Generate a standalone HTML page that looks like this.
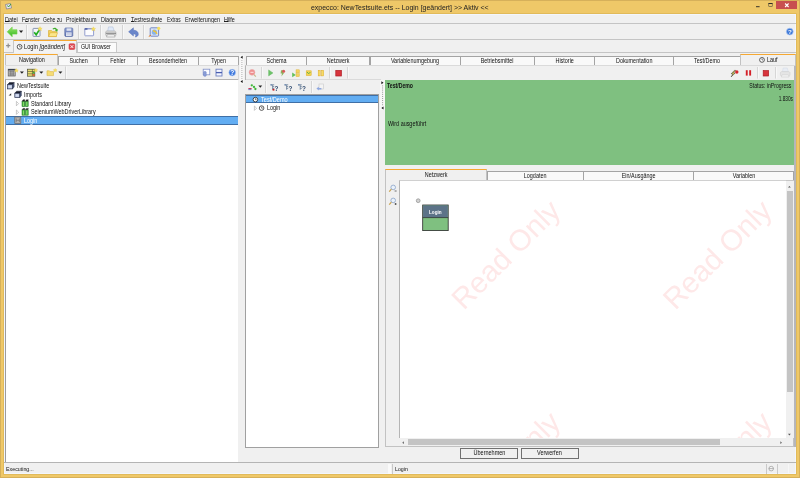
<!DOCTYPE html>
<html>
<head>
<meta charset="utf-8">
<title>expecco</title>
<style>
*{box-sizing:border-box;margin:0;padding:0}
html{background:#efc868}
body{filter:blur(.3px)}
html,body{width:800px;height:478px;overflow:hidden;background:#efc868;font-family:"Liberation Sans",sans-serif;font-size:6.3px;color:#111;-webkit-text-size-adjust:none}
.a{position:absolute}
.t{position:absolute;white-space:nowrap;line-height:8px;height:8px;transform:scaleX(.86);transform-origin:0 50%}
.s{display:inline-block;transform:scaleX(.86);white-space:nowrap}
#win{left:4px;top:13.9px;width:792.1px;height:460px;background:#f0f0f0;border:.9px solid #f3f6fc;box-shadow:0 0 0 .8px #deb758}
#frame{left:0;top:0;width:800px;height:478px;border:.9px solid #d6b05a}
.hl{position:absolute;height:1px;background:#c4c4c4;left:4px;width:792px}
.tab{position:absolute;height:9.3px;top:55.6px;background:#f9f9f9;border:.8px solid #a4a4a4;border-bottom:none;text-align:center;line-height:7.8px;white-space:nowrap;margin-right:-.8px;box-shadow:0 .8px 0 #c8c8c8}
.tab.on{background:#f0f0f0;top:53.6px;height:12.4px;border:.8px solid #c2c2c2;border-top:1.5px solid #f5a832;border-bottom:none;line-height:10.6px;box-shadow:none}
.tab2{top:170.9px;height:9px;line-height:7.4px}
.tab2.on{top:169px;height:11.8px;line-height:9.6px}
.white{position:absolute;background:#fff;border:1px solid #8e8e8e}
.sel{position:absolute;background:#62adf2;color:#fff;border-top:.7px solid #3f6fa6;border-bottom:.7px solid #3f6fa6}
u{text-decoration:none;display:inline-block;line-height:7px;height:6.7px;border-bottom:.8px solid #222}
.vs{position:absolute;width:1px;background:#c9c9c9}
.btn{position:absolute;height:10.6px;top:448.2px;border:.9px solid #707070;background:#f0f0f0;text-align:center;line-height:8.6px;font-size:6.4px}
.wm{position:absolute;color:#fde3e3;font-size:23px;transform:rotate(-45deg);transform-origin:0 0;white-space:nowrap;line-height:24px}
</style>
</head>
<body>
<!-- title bar -->
<div class="t" style="left:311px;top:3.6px;font-size:7.4px;color:#222;transform:scaleX(.94)">expecco: NewTestsuite.ets -- Login [geändert] &gt;&gt; Aktiv &lt;&lt;</div>
<div class="a" style="left:776.2px;top:.4px;width:20.5px;height:9.1px;background:#c8504f"></div>
<svg class="a" style="left:0;top:0" width="800" height="14">
 <path d="M785.1 3.5l3.5 3.5m0-3.5l-3.5 3.5" stroke="#fff" stroke-width="1.1" fill="none"/>
 <rect x="768.8" y="3.4" width="3.4" height="3" fill="none" stroke="#333" stroke-width=".5"/><path d="M768.6 3.5h3.8" stroke="#222" stroke-width=".9"/>
 <path d="M756 6.7h3.6" stroke="#222" stroke-width=".9"/>
 <!-- app icon -->
 <path d="M5.5 4.5l5-1 1 4.5-5 1z" fill="#e8e8f0" stroke="#7a7a8a" stroke-width=".7"/>
 <path d="M7.5 5.5l1 1.5 2.5-3" stroke="#3a9a3a" stroke-width="1" fill="none"/>
</svg>

<div id="frame" class="a"></div>
<div id="win" class="a"></div>

<!-- menu bar -->
<div class="t" style="left:5px;top:15.6px"><u>D</u>atei</div>
<div class="t" style="left:21.7px;top:15.6px;transform:scaleX(.825)">F<u>e</u>nster</div>
<div class="t" style="left:43px;top:15.6px;transform:scaleX(.805)">Gehe zu</div>
<div class="t" style="left:66px;top:15.6px">Projektbaum</div>
<div class="t" style="left:101px;top:15.6px">Diagramm</div>
<div class="t" style="left:131px;top:15.6px"><u>T</u>estresultate</div>
<div class="t" style="left:167px;top:15.6px;transform:scaleX(.76)">Extras</div>
<div class="t" style="left:185px;top:15.6px">Erweiterungen</div>
<div class="t" style="left:224px;top:15.6px"><u>H</u>ilfe</div>
<div class="hl" style="top:23px"></div>
<div class="hl" style="top:39px"></div>
<div class="hl" style="top:52px"></div>

<!-- MAIN TOOLBAR -->
<svg id="tb1" class="a" style="left:0;top:23.6px" width="800" height="16">
 <defs>
  <linearGradient id="gg" x1="0" y1="0" x2="0" y2="1"><stop offset="0" stop-color="#9be86a"/><stop offset="1" stop-color="#2fb520"/></linearGradient>
  <linearGradient id="bl" x1="0" y1="0" x2="0" y2="1"><stop offset="0" stop-color="#8e9fd2"/><stop offset="1" stop-color="#5a6eae"/></linearGradient>
 </defs>
 <!-- back arrow -->
 <path d="M7.2 7.8L12.2 3v2.7h4.8v4.4h-4.8v2.7z" fill="url(#gg)" stroke="#6fd24a" stroke-width=".6"/>
 <path d="M19 6.6h4.2l-2.1 2.3z" fill="#222"/>
 <path d="M26.5 1v14M78.5 1v14M100.5 1v14M122.5 1v14M143.5 1v14" stroke="#d2d2d2" stroke-width="1"/><path d="M27.4 1v14M79.4 1v14M101.4 1v14M123.4 1v14M144.4 1v14" stroke="#fbfbfb" stroke-width=".8"/>
 <!-- check doc -->
 <rect x="33" y="4.4" width="7" height="8" rx=".6" fill="#f4f6fa" stroke="#7c8cab" stroke-width=".9"/>
 <path d="M34.2 8.2l2 2.6 3.4-5.4" stroke="#1fae22" stroke-width="1.7" fill="none"/>
 <path d="M40 2.6l.7 1.4 1.5.2-1.1 1 .3 1.5-1.4-.8-1.4.8.3-1.5-1.1-1 1.5-.2z" fill="#f6e060" stroke="#e8c840" stroke-width=".3"/>
 <!-- open folder -->
 <path d="M48.5 6.5h3l.8.9h4.2v5.2h-8z" fill="#f3d25e" stroke="#d7a92d" stroke-width=".6"/>
 <path d="M48.6 12.5l1.6-3.8h7.4l-1.4 3.8z" fill="#fbe68a" stroke="#d7a92d" stroke-width=".5"/>
 <path d="M52.5 4.8c1.6-1.7 3.8-1.4 4.6.6l1-.3-.9 2.6-2.4-1.4 1-.4c-.6-1.1-1.8-1.2-2.7-.4z" fill="#3fae2c"/>
 <!-- save -->
 <rect x="64.8" y="4" width="8" height="8.4" rx=".9" fill="url(#bl)" stroke="#5c6ea8" stroke-width=".7"/>
 <rect x="66.6" y="4.4" width="4.6" height="2.4" fill="#dfe4f2"/>
 <rect x="66" y="8.4" width="5.6" height="3.6" fill="#e4e8f4"/>
 <path d="M66.4 9.6h4.8M66.4 10.8h4.8" stroke="#aab4d4" stroke-width=".5"/>
 <!-- new -->
 <rect x="84.8" y="4.6" width="8.8" height="7.2" rx=".6" fill="#fcfcfe" stroke="#7a88c4" stroke-width=".8"/>
 <path d="M84.6 5h3" stroke="#3e4f9a" stroke-width="1.4"/><path d="M87.6 4.9h6" stroke="#8e9bd0" stroke-width="1"/>
 <path d="M93.4 2.8l.7 1.4 1.5.2-1.1 1 .3 1.5-1.4-.8-1.4.8.3-1.5-1.1-1 1.5-.2z" fill="#f6e060" stroke="#e8c840" stroke-width=".3"/>
 <!-- printer -->
 <path d="M107.6 7.5l.9-4.6h4.4l1.4 4.6z" fill="#dfe9f8" stroke="#a9b8d6" stroke-width=".5"/>
 <path d="M105.6 8.2c0-.8 1-1.3 2-1.3h6.2c1.2 0 2.2.6 2.2 1.5v2.4c0 .8-.8 1.2-1.6 1.2h-7.2c-.9 0-1.6-.5-1.6-1.3z" fill="#d9d9d9" stroke="#9c9c9c" stroke-width=".5"/>
 <path d="M107.3 10.6h7l.8 2.4h-8.6z" fill="#f2f2f2" stroke="#8a8a8a" stroke-width=".5"/>
 <path d="M106 9.3h10" stroke="#6e6e6e" stroke-width=".8"/>
 <!-- undo -->
 <path d="M128.6 7.8L133.4 3.8V6.2C136.5 6.2 138.5 8 138.3 10.4C138.1 11.8 137 12.8 135.2 13C136.2 12 136.2 10 133.4 9.8V12z" fill="#6a86ca" stroke="#5570b8" stroke-width=".5"/>
 <!-- settings icon -->
 <rect x="150.2" y="3.8" width="8.4" height="8.4" rx=".8" fill="#dbe4f5" stroke="#6a7fbf" stroke-width=".9"/>
 <circle cx="154.4" cy="8.2" r="2.6" fill="#8ab4e8"/>
 <path d="M153 6.5l2.6 1.2 1.4 2.2" stroke="#f2c230" stroke-width="1.4" fill="none"/>
 <circle cx="158.7" cy="4.3" r="1.6" fill="#f6df5a"/>
 <path d="M148.8 12.4l2-1" stroke="#e07a20" stroke-width="1"/>
 <!-- help right -->
 <circle cx="789.8" cy="7.6" r="3.4" fill="#3c78d8" stroke="#a9c4f0" stroke-width=".7"/>
 <text x="789.8" y="9.9" font-size="6.2" font-weight="bold" fill="#fff" text-anchor="middle" font-family="Liberation Sans">?</text>
</svg>

<!-- document tabs -->
<div id="doctabs">
 <svg class="a" style="left:6px;top:42.5px" width="7" height="7"><path d="M2.2 .5v4.2M.1 2.6h4.2" stroke="#8e8e8e" stroke-width="1.2"/></svg>
 <div class="a" style="left:13px;top:40px;width:64px;height:13px;background:#f3f3f3;border:1px solid #c6c6c6;border-top:1.6px solid #f5a832;border-bottom:none;border-radius:1px 1px 0 0"></div>
 <svg class="a" style="left:15.7px;top:43px" width="8" height="8"><circle cx="3.6" cy="3.8" r="2.4" fill="#fff" stroke="#333" stroke-width=".8"/><path d="M3.6 2.3v1.6h1.3" stroke="#333" stroke-width=".6" fill="none"/></svg>
 <div class="t" style="left:24px;top:43px;font-size:6.3px;transform:scaleX(.905)">Login <i>[geändert]</i></div>
 <svg class="a" style="left:67.5px;top:42.5px" width="8" height="8"><rect x="1" y=".7" width="5.8" height="5.8" rx="1" fill="#de4a52" stroke="#c8323a" stroke-width=".5"/><path d="M2.5 2.2l2.8 2.8m0-2.8l-2.8 2.8" stroke="#fff" stroke-width=".9"/></svg>
 <div class="a" style="left:77px;top:42px;width:40px;height:10px;background:#fbfbfb;border:1px solid #c9c9c9;border-bottom:none;border-radius:1px 1px 0 0"></div>
 <div class="t" style="left:81px;top:43.3px;font-size:6.6px;transform:scaleX(.79)">GUI Browser</div>
</div>

<!-- LEFT PANEL -->
<div id="left">
 <div class="tab on" style="left:5px;width:53px"><span class="s">Navigation</span></div>
 <div class="tab" style="left:58px;width:40.8px"><span class="s">Suchen</span></div>
 <div class="tab" style="left:98px;width:39.8px"><span class="s">Fehler</span></div>
 <div class="tab" style="left:136.8px;width:62.4px"><span class="s">Besonderheiten</span></div>
 <div class="tab" style="left:198.3px;width:40.5px"><span class="s">Typen</span></div>
 <div class="a" style="left:5px;top:65px;width:234px;height:15px;border:1px solid #dadada;border-bottom:none;background:#f0f0f0"></div>
 <svg class="a" style="left:0;top:66px" width="246" height="14">
  <!-- icon 1 -->
  <rect x="8.2" y="3.2" width="7" height="6.8" fill="#c4c4c4" stroke="#555" stroke-width=".7"/>
  <path d="M8.2 3.7h7" stroke="#38404e" stroke-width="1.3"/>
  <path d="M9.2 5.6h5M9.2 7.2h5M9.2 8.8h5M10.4 4.4v5.4M12 4.4v5.4M13.6 4.4v5.4" stroke="#6a6a6a" stroke-width=".55"/>
  <path id="st" d="M16.4 2.6l.6 1.2 1.3.2-.95.9.25 1.3-1.2-.65-1.2.65.25-1.3-.95-.9 1.3-.2z" fill="#f6e060" stroke="#e6c63c" stroke-width=".3"/>
  <path d="M19.9 5.6h4l-2 2.2z" fill="#222"/>
  <!-- icon 2 -->
  <rect x="27.6" y="3.2" width="7.2" height="7" fill="#ece070" stroke="#4e4e38" stroke-width=".7"/>
  <path d="M27.6 5.5h7.2M27.6 7.8h7.2M32.4 3.2v7" stroke="#4e4e38" stroke-width=".6"/>
  <rect x="32.7" y="5.8" width="1.9" height="1.7" fill="#46b03a"/><rect x="32.7" y="8.1" width="1.9" height="1.7" fill="#e0552e"/>
  <use href="#st" x="19.4" y="-.2"/>
  <path d="M39.3 5.6h4l-2 2.2z" fill="#222"/>
  <!-- icon 3 -->
  <path d="M47 4.8h2.4l.7.8h3.4v4h-6.5z" fill="#f6dc74" stroke="#dcb848" stroke-width=".6"/>
  <use href="#st" x="38.8" y="-.2"/>
  <path d="M58.4 5.6h4l-2 2.2z" fill="#222"/>
  <path d="M65.5 0.5v13" stroke="#d2d2d2"/><path d="M66.4 0.5v13" stroke="#fbfbfb" stroke-width=".8"/>
  <!-- right icons -->
  <rect x="203.2" y="3.2" width="6.6" height="5.6" fill="#fafbff" stroke="#7f90c8" stroke-width=".8"/>
  <rect x="203.6" y="5.6" width="2.6" height="4.6" rx=".6" fill="#8a9ed8" stroke="#6d80c0" stroke-width=".5"/>
  <rect x="216" y="3.2" width="6" height="6.8" fill="#f4f6ff" stroke="#6d80c0" stroke-width=".9"/>
  <path d="M216 6.6h6" stroke="#4a5fb0" stroke-width="1.3"/>
  <circle cx="232.2" cy="6.6" r="3.3" fill="#3b76dc" stroke="#a6c2f2" stroke-width=".6"/>
  <text x="232.2" y="9" font-size="6.6" font-weight="bold" fill="#fff" text-anchor="middle" font-family="Liberation Sans">?</text>
 </svg>
 <div class="white" style="left:4.7px;top:78.6px;width:233.8px;height:383.2px;border-right:none;border-bottom:none;border-top-color:#b4b4b4;border-left-color:#9c9c9c"></div>
 <div class="sel" style="left:6px;top:116px;width:232px;height:9px"></div>
 <div class="t" style="left:16.5px;top:82.3px">NewTestsuite</div>
 <div class="t" style="left:24px;top:91px">Imports</div>
 <div class="t" style="left:31px;top:99.7px">Standard Library</div>
 <div class="t" style="left:31px;top:108.4px">SeleniumWebDriverLibrary</div>
 <div class="t" style="left:24px;top:116.5px;color:#fff">Login</div>
 <svg class="a" style="left:0;top:80px" width="60" height="48">
  <defs><g id="cube"><path d="M.2 2.2l1.8-2h4.8l-1.6 2z" fill="#1c2030" stroke="#14182a" stroke-width=".5"/><rect x=".2" y="2.3" width="5" height="4.2" fill="#b6c2de" stroke="#2a3350" stroke-width=".7"/><path d="M5.2 2.3l1.6-2v4.2l-1.6 2z" fill="#4a5678" stroke="#222a44" stroke-width=".4"/><rect x="1.2" y="3.3" width="3" height="2.2" fill="#d4dcf0"/></g>
  <g id="lib"><rect x="0" y="1.6" width="2.8" height="5.4" fill="#3db23a" stroke="#1f6a22" stroke-width=".5"/><rect x="3.4" y="1.6" width="2.8" height="5.4" fill="#3db23a" stroke="#1f6a22" stroke-width=".5"/><path d="M.2 1.6l.8-1.4h2l-.6 1.4M3.6 1.6l.8-1.4h2l-.6 1.4" fill="#222" stroke="#222" stroke-width=".4"/><path d="M1.4 2.4v4M4.8 2.4v4" stroke="#b5f08a" stroke-width=".7"/></g></defs>
  <use href="#cube" x="7.4" y="2.4"/>
  <use href="#cube" x="14.6" y="11"/>
  <path d="M8.6 15.6l2.6-2.4v2.4z" fill="#333"/>
  <path d="M16.4 21.4l2.2 2.2-2.2 2.2z" fill="#fff" stroke="#a6a6a6" stroke-width=".6"/>
  <path d="M16.4 30l2.2 2.2-2.2 2.2z" fill="#fff" stroke="#a6a6a6" stroke-width=".6"/>
  <use href="#lib" x="22" y="19.6"/>
  <use href="#lib" x="22" y="28.2"/>
  <rect x="14.8" y="37" width="6" height="6.6" fill="#b4b4b4" stroke="#666" stroke-width=".7"/>
  <path d="M16.2 38.4v3.8M19.4 38.4v3.8M16.2 40.3h3.2" stroke="#707070" stroke-width=".7"/>
 </svg>
 <!-- splitter -->
 <svg class="a" style="left:239px;top:54px" width="7" height="40">
  <rect x=".6" y="1" width="4.2" height="29.4" fill="#f8f8f8"/>
  <path d="M3.6 1.7v3l-2.1-1.5z" fill="#111"/><path d="M3.6 26v3l-2.1-1.5z" fill="#111"/>
  <path d="M2.9 6v19" stroke="#777" stroke-width=".8" stroke-dasharray=".7 1.3"/>
 </svg>
</div>

<!-- RIGHT PANEL -->
<div id="right">
 <div class="tab" style="left:246px;width:60.8px"><span class="s">Schema</span></div>
 <div class="tab" style="left:306px;width:63.8px"><span class="s">Netzwerk</span></div>
 <div class="tab" style="left:370px;width:90.8px"><span class="s">Variablenumgebung</span></div>
 <div class="tab" style="left:460px;width:74.8px"><span class="s">Betriebsmittel</span></div>
 <div class="tab" style="left:534px;width:60.8px"><span class="s">Historie</span></div>
 <div class="tab" style="left:594px;width:79.8px"><span class="s">Dokumentation</span></div>
 <div class="tab" style="left:673px;width:67.8px"><span class="s">Test/Demo</span></div>
 <div class="tab on" style="left:740px;width:55.5px"></div>
 <div class="a" style="left:245px;top:65px;width:550px;height:15px;border:1px solid #dadada;border-left-color:#b4b4b4;border-bottom:none;background:#f0f0f0"></div>
 <svg id="tb2" class="a" style="left:0;top:0;z-index:5" width="800" height="120">
 <defs>
  <g id="qtree"><path d="M.6 .8h3.2M2.2 .8v5M2.2 2.6h1.6M2.2 4.4h1.6" stroke="#56708e" stroke-width=".7" fill="none"/><rect x="0" y="0" width="1.6" height="1.6" fill="#7b93b4"/><text x="4" y="6.6" font-size="6.4" font-weight="bold" fill="#2f4a6e" font-family="Liberation Sans">?</text></g>
 </defs>
 <!-- row1 -->
 <circle cx="252" cy="72.3" r="2.9" fill="#ef8f8f" stroke="#e9a9a9" stroke-width=".6"/>
 <path d="M250.4 72.3h3.2" stroke="#fbe4e4" stroke-width="1"/>
 <path d="M254 74.6l1.8 2" stroke="#c9b78a" stroke-width="1.2"/>
 <path d="M261.5 67v11.5M329.5 67v11.5M347.5 67v11.5M757.5 67v11.5M775.5 67v11.5" stroke="#d4d4d4"/><path d="M262.4 67v11.5M330.4 67v11.5M348.4 67v11.5M758.4 67v11.5M776.4 67v11.5" stroke="#fbfbfb" stroke-width=".8"/>
 <path d="M268.6 69.9l4.4 3-4.4 3z" fill="#6cc268" stroke="#5cb458" stroke-width=".4"/>
 <path d="M281 70.2h3.4l-1.6 2.4h1.6l-3 3.8.6-2.8h-1.4z" fill="#8ab35e"/>
 <circle cx="283.6" cy="71.3" r="1.5" fill="#d85a58"/>
 <path d="M292.2 72.6l3.6 2.3-3.6 2.3z" fill="#63c05a"/>
 <rect x="296" y="69.8" width="3.4" height="3" fill="#f3d25e" stroke="#d9b030" stroke-width=".4"/><rect x="296" y="73.6" width="3.4" height="3" fill="#f3d25e" stroke="#d9b030" stroke-width=".4"/>
 <rect x="306.2" y="70.8" width="5" height="4.8" fill="#f4d452" stroke="#dcae2c" stroke-width=".5"/>
 <path d="M307 72l1.7 1.8 1.7-1.8" stroke="#58b04a" stroke-width=".9" fill="none"/>
 <rect x="318.2" y="70.3" width="2" height="5.6" fill="#f8dc60" stroke="#dca828" stroke-width=".5"/><rect x="321.6" y="70.3" width="2" height="5.6" fill="#f8dc60" stroke="#dca828" stroke-width=".5"/>
 <rect x="335.8" y="70.4" width="5.6" height="5.6" fill="#d8343c" stroke="#b01c24" stroke-width=".7"/>
 <!-- row1 right -->
 <path d="M734.4 70.4l-3.2 3.4h1.8l-1.8 3 4-3.8h-1.8l2.2-2.6z" fill="#f2e25a" stroke="#222" stroke-width=".5"/>
 <circle cx="736.8" cy="72" r="1.7" fill="#d8232b"/>
 <rect x="745.8" y="70.2" width="1.9" height="5.4" fill="#d42028"/><rect x="749.2" y="70.2" width="1.9" height="5.4" fill="#d42028"/>
 <rect x="763.2" y="70.6" width="5.4" height="5.4" fill="#d8343c" stroke="#b01c24" stroke-width=".7"/>
 <g opacity=".45"><path d="M782.4 72l.8-4h4l1.2 4z" fill="#dfe9f8" stroke="#a9b8d6" stroke-width=".5"/><path d="M780.4 72.8c0-.8 1-1.2 2-1.2h5.6c1.2 0 2 .5 2 1.3v2c0 .8-.8 1.1-1.5 1.1h-6.6c-.9 0-1.5-.4-1.5-1.2z" fill="#d9d9d9" stroke="#9c9c9c" stroke-width=".5"/><path d="M782 74.8h6.4l.7 2.2h-7.8z" fill="#f6f6f6" stroke="#9a9a9a" stroke-width=".5"/></g>
 <!-- row2 -->
 <path d="M246 79.5h135" stroke="#dadada"/>
 <circle cx="251.8" cy="85.3" r="1.15" fill="#3fb63a"/><circle cx="254" cy="86.9" r="1.15" fill="#3fb63a"/><circle cx="255.4" cy="89" r="1.15" fill="#3fb63a"/>
 <path d="M248.4 88.6h3.2" stroke="#c83a5a" stroke-width="1.2"/><path d="M248.4 89.6h3" stroke="#4a62c0" stroke-width=".7"/>
 <path d="M258.4 85.6h3.8l-1.9 2.1z" fill="#222"/>
 <path d="M265.5 81v12M311.5 81v12" stroke="#d4d4d4"/><path d="M266.4 81v12M312.4 81v12" stroke="#fbfbfb" stroke-width=".8"/>
 <use href="#qtree" x="270.4" y="84"/><rect x="272.6" y="88.8" width="1.8" height="1.8" fill="#c82020"/>
 <use href="#qtree" x="284.4" y="84"/>
 <use href="#qtree" x="298" y="84"/>
 <rect x="319" y="84" width="4.6" height="5" fill="#f4f4f4" stroke="#c9c9c9" stroke-width=".6"/>
 <path d="M316.4 88.6l2.4-1.8v1.2h2.6v1.4h-2.6v1.2z" fill="#8fa8e0"/>
 <!-- tree icons -->
 <circle cx="255.4" cy="99.6" r="2.3" fill="#fff" stroke="#222" stroke-width=".8"/><path d="M255.4 98.2v1.5h1.2" stroke="#222" stroke-width=".6" fill="none"/>
 <path d="M254.4 106l2.2 2.2-2.2 2.2z" fill="#fff" stroke="#a6a6a6" stroke-width=".6"/>
 <circle cx="261.6" cy="108.1" r="2.3" fill="#fff" stroke="#333" stroke-width=".8"/><path d="M261.6 106.7v1.5h1.2" stroke="#333" stroke-width=".6" fill="none"/>
 <!-- Lauf tab clock -->
 <circle cx="762" cy="59.9" r="2.4" fill="#fff" stroke="#333" stroke-width=".8"/><path d="M762 58.4v1.6h1.2" stroke="#333" stroke-width=".6" fill="none"/>
 <!-- splitter 2 -->
 <rect x="380" y="80" width="5" height="30" fill="#f8f8f8"/>
 <path d="M381.4 81.2v3l2.1-1.5z" fill="#111"/><path d="M383.5 106.6v3l-2.1-1.5z" fill="#111"/>
 <path d="M382.6 85.5v20" stroke="#777" stroke-width=".9" stroke-dasharray=".8 1.3"/>
</svg>
 <!-- test tree -->
 <div class="white" style="left:244.8px;top:94px;width:134.5px;height:354px;border-color:#a0a0a0"></div>
 <div class="sel" style="left:245.8px;top:95px;width:132.5px;height:8.3px"></div>
 <div class="t" style="left:261px;top:95.5px;color:#fff;transform:scaleX(.885)">Test/Demo</div>
 <div class="t" style="left:267px;top:104px">Login</div>
 <!-- green panel -->
 <div class="a" style="left:385.1px;top:79.5px;width:409.4px;height:85.7px;background:#7fc080"></div>
 <div class="t" style="left:387.3px;top:81.5px;font-weight:bold;font-size:6.4px;transform:scaleX(.807)">Test/Demo</div>
 <div class="t" style="left:387.5px;top:119.5px">Wird ausgeführt</div>
 <div class="t" style="right:9px;top:82px;transform-origin:100% 50%;transform:scaleX(.82)">Status: inProgress</div>
 <div class="t" style="right:7.5px;top:94.8px;transform-origin:100% 50%;transform:scaleX(.75)">1.830s</div>
 <div class="t" style="left:767px;top:56px">Lauf</div>
 <!-- lower tabs -->
 <div class="a" style="left:384.9px;top:179.6px;width:409.6px;height:267.4px;border:1px solid #c2c2c2;background:#f0f0f0"></div>
 <div class="tab tab2 on" style="left:384.9px;width:102.1px"><span class="s">Netzwerk</span></div>
 <div class="tab tab2" style="left:487px;width:96.8px"><span class="s">Logdaten</span></div>
 <div class="tab tab2" style="left:583px;width:110.8px"><span class="s">Ein/Ausgänge</span></div>
 <div class="tab tab2" style="left:693px;width:101.3px"><span class="s">Variablen</span></div>
 <div class="a" style="left:399px;top:180px;width:386.7px;height:258px;background:#fff;border-left:1px solid #b5b5b5;border-top:1px solid #d0d0d0;overflow:hidden" id="canvas">
  <svg class="a" style="left:-400px;top:-181px" width="800" height="478">
   <g font-family="Liberation Sans" font-size="29.5" fill="#fee8e8">
    <text transform="translate(463.7,311) rotate(-45)">Read Only</text>
    <text transform="translate(675.2,311) rotate(-45)">Read Only</text>
    <text transform="translate(463.7,522.5) rotate(-45)">Read Only</text>
    <text transform="translate(675.2,522.5) rotate(-45)">Read Only</text>
   </g>
   <circle cx="418.2" cy="200.7" r="1.9" fill="#d2d2d2" stroke="#8e8e8e" stroke-width=".7"/>
   <rect x="422.7" y="205" width="25.5" height="25.6" fill="#7fc080" stroke="#2a2a2a" stroke-width=".8"/>
   <rect x="423.1" y="205.4" width="24.7" height="12.2" fill="#5c7388"/>
   <path d="M422.7 217.6h25.5" stroke="#2a2a2a" stroke-width=".7"/>
   <text x="429" y="213.6" font-family="Liberation Sans" font-size="5.6" font-weight="bold" fill="#fff" textLength="12.6" lengthAdjust="spacingAndGlyphs">Login</text>
  </svg>
 </div>
 <div id="scroll">
  <div class="a" style="left:785.7px;top:181px;width:8.3px;height:257px;background:#f0f0f0"></div>
  <div class="a" style="left:786.5px;top:190.5px;width:6px;height:201px;background:#c4c4c4"></div>
  <div class="a" style="left:400px;top:438px;width:386px;height:8px;background:#f0f0f0"></div>
  <div class="a" style="left:408px;top:439px;width:312px;height:6.4px;background:#c4c4c4"></div>
  <div class="a" style="left:794.3px;top:66px;width:1.7px;height:381px;background:#b6b6ba"></div>
  <svg class="a" style="left:386px;top:181.5px" width="410" height="268">
   <path d="M402 5.6l1.4-1.6 1.4 1.6zM402 251.8l1.4 1.6 1.4-1.6z" fill="#555"/>
   <path d="M17.8 259.3l-1.5 1.4 1.5 1.4zM394.4 259.3l1.5 1.4-1.5 1.4z" fill="#555"/>
   <g id="zm"><circle cx="7.2" cy="5.4" r="2.3" fill="#eaf2fb" stroke="#8aa2c6" stroke-width=".8"/><path d="M5.4 7.2l-2.2 2.4" stroke="#c8a04a" stroke-width="1.2"/></g>
   <use href="#zm" y="13"/>
   <path d="M8.6 9h2" stroke="#333" stroke-width=".7"/>
   <path d="M8.6 22h2M9.6 21v2" stroke="#333" stroke-width=".7"/>
  </svg>
 </div>
 <div class="btn" style="left:460.3px;width:58px"><span class="s">Übernehmen</span></div>
 <div class="btn" style="left:520.5px;width:58px"><span class="s">Verwerfen</span></div>
</div>

<!-- status bar -->
<div id="status">
 <div class="a" style="left:4px;top:461.7px;width:792px;height:1px;background:#b4b4b4"></div>
 <div class="t" style="left:6px;top:465px;font-size:6.1px;transform:scaleX(.87)">Executing...</div>
 <div class="t" style="left:395px;top:465px;font-size:6.1px">Login</div>
 <div class="vs" style="left:388px;top:463.5px;height:10.5px;background:#fafafa;width:2.5px"></div>
 <div class="vs" style="left:391.5px;top:463.5px;height:10.5px"></div>
 <div class="vs" style="left:765.5px;top:463.5px;height:10.5px"></div>
 <div class="vs" style="left:777px;top:463.5px;height:10.5px"></div>
 <div class="vs" style="left:788px;top:463.5px;height:10.5px;background:#f7f7f7;width:1px"></div>
 <svg class="a" style="left:766px;top:464px" width="11" height="10"><circle cx="5.2" cy="4.6" r="2.3" fill="#f4f4f4" stroke="#8a8a8a" stroke-width=".6"/><path d="M2.9 4.6h4.6" stroke="#8a8a8a" stroke-width=".6"/></svg>
</div>
</body>
</html>
